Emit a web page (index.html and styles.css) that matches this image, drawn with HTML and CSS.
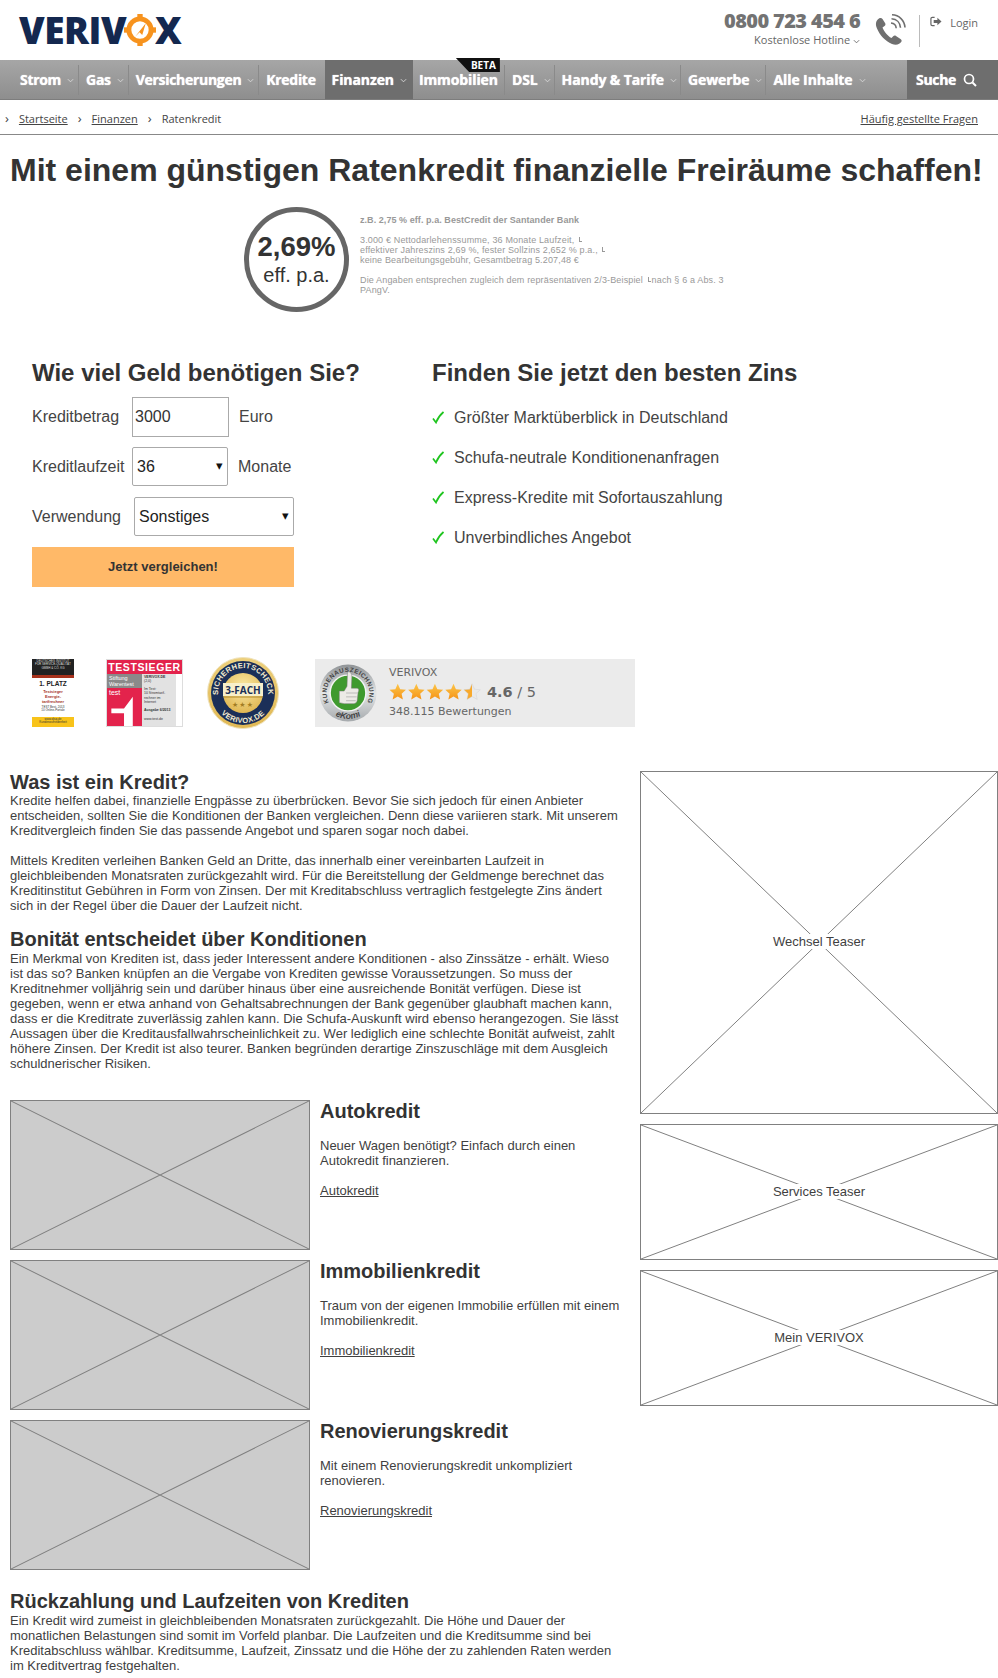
FILE: index.html
```html
<!DOCTYPE html>
<html lang="de">
<head>
<meta charset="utf-8">
<title>Ratenkredit - VERIVOX</title>
<link rel="stylesheet" href="styles.css">
</head>
<body>
<header class="top">
  <a class="logo" href="#">VERIV<svg class="logo-o" viewBox="0 0 36 36" aria-hidden="true"><circle cx="18" cy="18" r="12.500" fill="none" stroke="#f7931e" stroke-width="5.500"/><rect x="15" y="0" width="6" height="4" fill="#f7931e"/><rect x="15" y="32" width="6" height="4" fill="#f7931e"/><rect x="0" y="15" width="4" height="6" fill="#f7931e"/><rect x="32" y="15" width="4" height="6" fill="#f7931e"/><path d="M24.500 10.500L12.500 25.500 17.500 20.500 20.500 23.500Z" fill="#f7931e"/></svg>X</a>
  <div class="top-right">
    <div class="hotline">
      <div class="hotline-no">0800 723 454 6</div>
      <div class="hotline-sub">Kostenlose Hotline <svg class="chev" viewBox="0 0 8 5"><path d="M1 1l3 3 3-3" fill="none" stroke="currentColor"/></svg></div>
    </div>
    <svg class="phone" viewBox="0 0 34 32" aria-hidden="true"><path d="M5 4.500C2 6.500 1 10 3 14.500 6 21.500 11 27 18 30c4 1.500 8 .5 9.500-2.500.5-1-.2-1.800-1-2.500l-4.500-3c-1-.7-2-.5-2.800.3l-1.700 1.700c-4-2-7.500-6.500-9-10.500l2-1.500c1-.8 1.200-1.800.7-2.800L8.500 5C7.800 4 6.300 3.700 5 4.500Z" fill="#6f6f6f"/><path d="M17 9c2.800.2 5 2.400 5.200 5.200M17.500 4.800c5.200.3 8.700 3.800 9 9M18 .8c7.200.3 12.500 5.500 13 12.700" fill="none" stroke="#6f6f6f" stroke-width="1.600"/></svg>
    <div class="top-div"></div>
    <a class="login" href="#"><svg viewBox="0 0 13 11" aria-hidden="true"><path d="M5 1H2.500A1.500 1.500 0 0 0 1 2.500v6A1.500 1.500 0 0 0 2.500 10H5" fill="none" stroke="#666" stroke-width="1.300"/><path d="M4 4h4V1.500l4.500 4-4.500 4V7H4Z" fill="#666"/></svg>Login</a>
  </div>
</header>

<nav class="nav">
  <ul class="nav-list">
    <li class="nav-item sep first">Strom<svg class="chev" viewBox="0 0 8 5"><path d="M1 1l3 3 3-3" fill="none" stroke="currentColor"/></svg></li>
    <li class="nav-item sep">Gas<svg class="chev" viewBox="0 0 8 5"><path d="M1 1l3 3 3-3" fill="none" stroke="currentColor"/></svg></li>
    <li class="nav-item sep">Versicherungen<svg class="chev" viewBox="0 0 8 5"><path d="M1 1l3 3 3-3" fill="none" stroke="currentColor"/></svg></li>
    <li class="nav-item kredite">Kredite</li>
    <li class="nav-item wide active">Finanzen<svg class="chev" viewBox="0 0 8 5"><path d="M1 1l3 3 3-3" fill="none" stroke="currentColor"/></svg></li>
    <li class="nav-item wide sep immo">Immobilien<span class="beta">BETA</span></li>
    <li class="nav-item wide sep">DSL<svg class="chev" viewBox="0 0 8 5"><path d="M1 1l3 3 3-3" fill="none" stroke="currentColor"/></svg></li>
    <li class="nav-item wide sep">Handy &amp; Tarife<svg class="chev" viewBox="0 0 8 5"><path d="M1 1l3 3 3-3" fill="none" stroke="currentColor"/></svg></li>
    <li class="nav-item wide sep">Gewerbe<svg class="chev" viewBox="0 0 8 5"><path d="M1 1l3 3 3-3" fill="none" stroke="currentColor"/></svg></li>
    <li class="nav-item wide">Alle Inhalte<svg class="chev" viewBox="0 0 8 5"><path d="M1 1l3 3 3-3" fill="none" stroke="currentColor"/></svg></li>
  </ul>
  <div class="nav-search">Suche<svg viewBox="0 0 14 14" aria-hidden="true"><circle cx="6" cy="6" r="4.500" fill="none" stroke="#fff" stroke-width="1.700"/><path d="M9.500 9.500L13 13" stroke="#fff" stroke-width="1.900"/></svg></div>
</nav>

<div class="crumbs">
  <div class="crumb-list">
    <span class="crumb-sep">›</span><a href="#">Startseite</a>
    <span class="crumb-sep">›</span><a href="#">Finanzen</a>
    <span class="crumb-sep">›</span><span>Ratenkredit</span>
  </div>
  <a href="#">Häufig gestellte Fragen</a>
</div>

<main class="page">
  <h1 class="title">Mit einem günstigen Ratenkredit finanzielle Freiräume schaffen!</h1>

  <section class="promo">
    <div class="rate"><strong>2,69%</strong><span>eff. p.a.</span></div>
    <div class="fine">
      <p><b>z.B. 2,75 % eff. p.a. BestCredit der Santander Bank</b></p>
      <p>3.000 € Nettodarlehenssumme, 36 Monate Laufzeit, <i class="lb"></i><br>effektiver Jahreszins 2,69 %, fester Sollzins 2,652 % p.a., <i class="lb"></i><br>keine Bearbeitungsgebühr, Gesamtbetrag 5.207,48 €</p>
      <p>Die Angaben entsprechen zugleich dem repräsentativen 2/3-Beispiel <i class="lb"></i>nach § 6 a Abs. 3 PAngV.</p>
    </div>
  </section>

  <section class="calc">
    <form class="calc-form">
      <h2 class="calc-h">Wie viel Geld benötigen Sie?</h2>
      <div class="row row-first">
        <label class="lab lab-a">Kreditbetrag</label>
        <input class="field" type="text" value="3000">
        <span class="unit">Euro</span>
      </div>
      <div class="row row-tight">
        <label class="lab lab-b">Kreditlaufzeit</label>
        <div class="sel sel-s">36</div>
        <span class="unit">Monate</span>
      </div>
      <div class="row">
        <label class="lab lab-c">Verwendung</label>
        <div class="sel sel-l">Sonstiges</div>
      </div>
      <button class="go" type="button">Jetzt vergleichen!</button>
    </form>
    <div class="benefits">
      <h2 class="calc-h">Finden Sie jetzt den besten Zins</h2>
      <ul class="checks">
        <li><svg viewBox="0 0 12 13" aria-hidden="true"><path d="M1 7.500L4 11.500C5.500 7.500 8 4 11.500 1" fill="none" stroke="#1fc41f" stroke-width="1.700"/></svg>Größter Marktüberblick in Deutschland</li>
        <li><svg viewBox="0 0 12 13" aria-hidden="true"><path d="M1 7.500L4 11.500C5.500 7.500 8 4 11.500 1" fill="none" stroke="#1fc41f" stroke-width="1.700"/></svg>Schufa-neutrale Konditionenanfragen</li>
        <li><svg viewBox="0 0 12 13" aria-hidden="true"><path d="M1 7.500L4 11.500C5.500 7.500 8 4 11.500 1" fill="none" stroke="#1fc41f" stroke-width="1.700"/></svg>Express-Kredite mit Sofortauszahlung</li>
        <li><svg viewBox="0 0 12 13" aria-hidden="true"><path d="M1 7.500L4 11.500C5.500 7.500 8 4 11.500 1" fill="none" stroke="#1fc41f" stroke-width="1.700"/></svg>Unverbindliches Angebot</li>
      </ul>
    </div>
  </section>

  <section class="trust">
    <div class="b-dis">
      <div class="dis-top">DEUTSCHES INSTITUT<br>FÜR SERVICE-QUALITÄT<br>GMBH &amp; CO. KG</div>
      <div class="dis-mid"><b class="dis-big">1. PLATZ</b><b class="dis-red">Testsieger<br>Energie-<br>tarifrechner</b><span class="dis-date">TEST Best. 2013<br>10 Online-Portale</span></div>
      <div class="dis-bot">www.disq.de<br>Kundenzufriedenheit</div>
    </div>
    <div class="b-test">
      <div class="t-head">TESTSIEGER</div>
      <div class="t-body">
        <div class="t-left">
          <div class="t-war">Stiftung<br>Warentest</div>
          <div class="t-logo"><span class="t-word">test</span><svg class="t-one" viewBox="0 0 35 39" aria-hidden="true"><path d="M4 21L17 21 26 9V39H17V26H4Z" fill="#fff"/></svg></div>
        </div>
        <div class="t-right"><b>VERIVOX.DE</b><br>(2,0)<br><br>Im Test:<br>10 Stromtarif-<br>rechner im<br>Internet<br><br><b>Ausgabe 6/2013</b><br><br>www.test.de</div>
        <div class="t-strip"></div>
      </div>
    </div>
    <svg class="b-seal" viewBox="0 0 74 76" role="img" aria-label="Sicherheitscheck 3-fach Verivox.de">
      <defs>
        <path id="arcT" d="M15.300 50.500A25 25 0 1 1 58.700 50.500"/>
        <path id="arcB" d="M11 53A30 30 0 0 0 63 53"/>
        <radialGradient id="gold" cx="50%" cy="35%" r="65%"><stop offset="0" stop-color="#fbe9a6"/><stop offset="1" stop-color="#e0b752"/></radialGradient>
      </defs>
      <circle cx="37" cy="38" r="35.500" fill="url(#gold)" stroke="#efe3bd" stroke-width="1"/>
      <circle cx="37" cy="38" r="32" fill="#1b2f58"/>
      <circle cx="37" cy="38" r="20" fill="url(#gold)"/>
      <rect x="17" y="28" width="40" height="13" fill="#f8efca"/>
      <text class="seal-arc"><textPath href="#arcT" startOffset="50%" text-anchor="middle">SICHERHEITSCHECK</textPath></text>
      <text class="seal-arc"><textPath href="#arcB" startOffset="50%" text-anchor="middle">VERIVOX.DE</textPath></text>
      <text class="seal-main" x="37" y="39" text-anchor="middle">3-FACH</text>
      <path d="M18 42H56" stroke="#b18a2d"/>
      <text class="seal-stars" x="37" y="52" text-anchor="middle">★★★</text>
    </svg>
    <div class="b-ekomi">
      <svg class="ek-badge" viewBox="0 0 60 60" role="img" aria-label="Kundenauszeichnung eKomi">
        <defs>
          <path id="ekT" d="M14.400 45.600A22 22 0 1 1 45.600 45.600"/>
          <path id="ekB" d="M11 49A27 27 0 0 0 49 49"/>
          <linearGradient id="silver" x1="0" y1="0" x2="0" y2="1"><stop offset="0" stop-color="#8f9396"/><stop offset=".5" stop-color="#e4e6e7"/><stop offset="1" stop-color="#a6aaad"/></linearGradient>
        </defs>
        <circle cx="30" cy="30" r="29.500" fill="url(#silver)"/>
        <circle cx="30" cy="30" r="18.500" fill="#3f9a2e" stroke="#f3f3f3" stroke-width="1.500"/>
        <path d="M21 28h5l3-5 .5-15c3.500 0 4.500 2 4.500 5l-.5 12h6c2 0 2 3 1 4l-1 9c-.5 2-2 3-4 3H26l-5-1Z" fill="#ecebe6" stroke="#777" stroke-width=".5"/>
        <path d="M28 30h12M28 34h11M28 38h10" stroke="#999" stroke-width=".6"/>
        <text class="ek-arc"><textPath href="#ekT" startOffset="50%" text-anchor="middle">KUNDENAUSZEICHNUNG</textPath></text>
        <text class="ek-name"><textPath href="#ekB" startOffset="50%" text-anchor="middle">eKomi</textPath></text>
      </svg>
      <div class="ek-text">
        <div class="ek-name-line">VERIVOX</div>
        <div class="ek-rating">
          <svg class="ek-stars" viewBox="0 0 96 19" aria-hidden="true">
            <defs>
              <linearGradient id="st" x1="0" y1="0" x2="0" y2="1"><stop offset="0" stop-color="#fcc64a"/><stop offset="1" stop-color="#f59316"/></linearGradient>
              <linearGradient id="sh" x1="0" y1="0" x2="1" y2="0"><stop offset=".5" stop-color="#f8a92c"/><stop offset=".5" stop-color="#e9e9e9"/></linearGradient>
              <path id="s" d="M9 .8l2.500 5.600 6 .6-4.500 4 1.300 6L9 14l-5.300 3 1.300-6-4.500-4 6-.6Z"/>
            </defs>
            <use href="#s" fill="url(#st)"/><use href="#s" x="19.200" fill="url(#st)"/><use href="#s" x="38.400" fill="url(#st)"/><use href="#s" x="57.600" fill="url(#st)"/><use href="#s" x="76.800" fill="url(#sh)" stroke="#ccc" stroke-width=".4"/>
          </svg>
          <span class="ek-score"><b>4.6</b> / 5</span>
        </div>
        <div class="ek-count">348.115 Bewertungen</div>
      </div>
    </div>
  </section>

  <div class="columns">
    <div class="col-main">
      <h2 class="sec-h sec-first">Was ist ein Kredit?</h2>
      <p class="copy">Kredite helfen dabei, finanzielle Engpässe zu überbrücken. Bevor Sie sich jedoch für einen Anbieter entscheiden, sollten Sie die Konditionen der Banken vergleichen. Denn diese variieren stark. Mit unserem Kreditvergleich finden Sie das passende Angebot und sparen sogar noch dabei.<br><br>Mittels Krediten verleihen Banken Geld an Dritte, das innerhalb einer vereinbarten Laufzeit in gleichbleibenden Monatsraten zurückgezahlt wird. Für die Bereitstellung der Geldmenge berechnet das Kreditinstitut Gebühren in Form von Zinsen. Der mit Kreditabschluss vertraglich festgelegte Zins ändert sich in der Regel über die Dauer der Laufzeit nicht.</p>
      <h2 class="sec-h sec-gap">Bonität entscheidet über Konditionen</h2>
      <p class="copy">Ein Merkmal von Krediten ist, dass jeder Interessent andere Konditionen - also Zinssätze - erhält. Wieso ist das so? Banken knüpfen an die Vergabe von Krediten gewisse Voraussetzungen. So muss der Kreditnehmer volljährig sein und darüber hinaus über eine ausreichende Bonität verfügen. Diese ist gegeben, wenn er etwa anhand von Gehaltsabrechnungen der Bank gegenüber glaubhaft machen kann, dass er die Kreditrate zuverlässig zahlen kann. Die Schufa-Auskunft wird ebenso herangezogen. Sie lässt Aussagen über die Kreditausfallwahrscheinlichkeit zu. Wer lediglich eine schlechte Bonität aufweist, zahlt höhere Zinsen. Der Kredit ist also teurer. Banken begründen derartige Zinszuschläge mit dem Ausgleich schuldnerischer Risiken.</p>

      <div class="cards">
        <article class="card">
          <svg class="ph-img" viewBox="0 0 300 150" preserveAspectRatio="none" aria-hidden="true"><path d="M0 0L300 150M300 0L0 150" stroke="#808080" vector-effect="non-scaling-stroke"/></svg>
          <div class="card-body"><h3>Autokredit</h3><p class="copy">Neuer Wagen benötigt? Einfach durch einen Autokredit finanzieren.</p><a href="#">Autokredit</a></div>
        </article>
        <article class="card">
          <svg class="ph-img" viewBox="0 0 300 150" preserveAspectRatio="none" aria-hidden="true"><path d="M0 0L300 150M300 0L0 150" stroke="#808080" vector-effect="non-scaling-stroke"/></svg>
          <div class="card-body"><h3>Immobilienkredit</h3><p class="copy">Traum von der eigenen Immobilie erfüllen mit einem Immobilienkredit.</p><a href="#">Immobilienkredit</a></div>
        </article>
        <article class="card">
          <svg class="ph-img" viewBox="0 0 300 150" preserveAspectRatio="none" aria-hidden="true"><path d="M0 0L300 150M300 0L0 150" stroke="#808080" vector-effect="non-scaling-stroke"/></svg>
          <div class="card-body"><h3>Renovierungskredit</h3><p class="copy">Mit einem Renovierungskredit unkompliziert renovieren.</p><a href="#">Renovierungskredit</a></div>
        </article>
      </div>

      <h2 class="sec-h">Rückzahlung und Laufzeiten von Krediten</h2>
      <p class="copy">Ein Kredit wird zumeist in gleichbleibenden Monatsraten zurückgezahlt. Die Höhe und Dauer der monatlichen Belastungen sind somit im Vorfeld planbar. Die Laufzeiten und die Kreditsumme sind bei Kreditabschluss wählbar. Kreditsumme, Laufzeit, Zinssatz und die Höhe der zu zahlenden Raten werden im Kreditvertrag festgehalten.</p>
    </div>
    <aside class="col-side">
      <div class="teaser t-big"><svg viewBox="0 0 358 343" preserveAspectRatio="none" aria-hidden="true"><path d="M0 0L358 343M358 0L0 343" stroke="#808080" vector-effect="non-scaling-stroke"/></svg><span>Wechsel Teaser</span></div>
      <div class="teaser t-small"><svg viewBox="0 0 358 136" preserveAspectRatio="none" aria-hidden="true"><path d="M0 0L358 136M358 0L0 136" stroke="#808080" vector-effect="non-scaling-stroke"/></svg><span>Services Teaser</span></div>
      <div class="teaser t-small"><svg viewBox="0 0 358 136" preserveAspectRatio="none" aria-hidden="true"><path d="M0 0L358 136M358 0L0 136" stroke="#808080" vector-effect="non-scaling-stroke"/></svg><span>Mein VERIVOX</span></div>
    </aside>
  </div>
</main>
</body>
</html>
```
FILE: styles.css
```css
* { box-sizing: border-box; }
html, body { margin: 0; padding: 0; background: #fff; }
body { font-family: "Liberation Sans", Arial, sans-serif; color: #333; font-size: 13px; line-height: 15px; overflow-x: hidden; }
a { color: inherit; }
ul { list-style: none; margin: 0; padding: 0; }
p { margin: 0; }

.top { height: 60px; display: flex; justify-content: space-between; align-items: flex-start; padding: 0 20px 0 19px; }
.logo { display: flex; align-items: center; height: 36px; margin-top: 12px; font-family: "Open Sans", sans-serif; font-weight: 800; font-size: 37px; line-height: 36px; color: #14284f; text-decoration: none; letter-spacing: -0.5px; }
.logo-o { width: 32px; height: 32px; margin: 0 -1px 0 -2px; }
.top-right { display: flex; align-items: flex-start; font-family: "Open Sans", sans-serif; color: #666; }
.hotline { margin-top: 8px; text-align: right; }
.hotline-no { font-size: 20px; line-height: 26px; font-weight: 800; color: #737373; letter-spacing: -0.6px; }
.hotline-sub { font-size: 11px; line-height: 12px; }
.chev { width: 7px; height: 5px; }
.phone { width: 34px; height: 32px; margin: 14px 0 0 14px; }
.top-div { width: 1px; height: 32px; background: #bbb; margin: 15px 0 0 11px; }
.login { display: flex; align-items: center; font-size: 11px; line-height: 15px; margin: 15px 0 0 10px; text-decoration: none; }
.login svg { width: 12px; height: 11px; margin-right: 8px; margin-top: -2px; }

.nav { height: 40px; display: flex; justify-content: space-between; background: linear-gradient(#a6a6a6, #8e8e8e); border-bottom: 1px solid #7d7d7d; font-family: "Open Sans", sans-serif; color: #fff; font-weight: 700; font-size: 14px; text-shadow: 0 0 1px #fff; letter-spacing: -0.3px; }
.nav-list { display: flex; padding-left: 13px; }
.nav-item { position: relative; display: flex; align-items: center; gap: 6px; height: 39px; padding: 0 5px 0 7px; }
.nav-item.wide { letter-spacing: -0.1px; padding-right: 4px; }
.nav-item .chev { color: #ddd; margin-top: 2px; }
.nav-item.sep::after { content: ""; position: absolute; right: 0; top: 5px; height: 30px; width: 1px; background: #8a8a8a; }
.nav-item.kredite { padding-right: 9px; }
.nav-item.active { background: #6e6e6e; padding-right: 6px; }
.nav-item.immo { padding-left: 6px; padding-right: 7px; }
.beta { position: absolute; right: 5px; top: -2px; width: 44px; height: 14px; padding-left: 15px; background: #111; clip-path: polygon(0 0, 100% 0, 100% 100%, 30% 100%); font-size: 10px; line-height: 15px; letter-spacing: 0; text-shadow: none; }
.nav-search { width: 91px; background: #6e6e6e; display: flex; align-items: center; gap: 7px; padding-left: 9px; }
.nav-search svg { width: 14px; height: 14px; }

.crumbs { height: 35px; border-bottom: 1px solid #888; display: flex; justify-content: space-between; align-items: center; padding: 3px 20px 0 5px; font-family: "Open Sans", sans-serif; font-size: 11px; color: #444; }
.crumb-list { display: flex; align-items: center; }
.crumb-sep { margin-right: 10px; margin-left: 10px; font-size: 13px; }
.crumb-sep:first-child { margin-left: 0; }

.page { padding: 0 0 0 10px; }
.title { margin: 0; padding-top: 17px; font-size: 32px; line-height: 36px; font-weight: 700; color: #333; }

.promo { display: flex; margin-top: 19px; padding-left: 234px; height: 105px; }
.rate { width: 105px; height: 105px; border: 5px solid #666; border-radius: 50%; display: flex; flex-direction: column; align-items: center; justify-content: center; flex: none; }
.rate strong { font-size: 27.500px; line-height: 30px; }
.rate span { font-size: 20px; line-height: 26px; }
.fine { width: 372px; margin-left: 11px; margin-top: 8px; font-size: 9px; line-height: 10px; color: #999; letter-spacing: .15px; }
.fine b { letter-spacing: .06px; }
.fine p { margin-bottom: 10px; }
.lb { display: inline-block; width: 3px; height: 5px; margin: 0 1px 1px 2px; border-left: 1px solid #999; border-bottom: 1px solid #999; }

.calc { display: flex; padding: 47px 0 0 22px; }
.calc-form { width: 400px; }
.calc-h { margin: 0; font-size: 24px; line-height: 28px; font-weight: 700; color: #333; }
.row { display: flex; align-items: center; height: 40px; margin-top: 10px; font-size: 16px; color: #444; }
.row-tight { margin-top: 9px; }
.row-first .lab, .row-first .unit { margin-bottom: 2px; }
.lab-a { width: 100px; }
.lab-b { width: 100px; }
.lab-c { width: 102px; }
.field { width: 97px; height: 40px; border: 1px solid #aaa; padding: 0 2px; font: 16px "Liberation Sans", Arial, sans-serif; color: #333; }
.sel { position: relative; height: 39px; border: 1px solid #aaa; border-radius: 2px; background: #fff; display: flex; align-items: center; padding-left: 4px; color: #222; }
.sel::after { content: "▾"; position: absolute; right: 4px; top: 10px; font-size: 13px; line-height: 15px; color: #111; }
.sel-s { width: 96px; }
.sel-l { width: 160px; }
.unit { margin-left: 10px; }
.go { display: block; width: 262px; height: 40px; margin-top: 11px; padding: 0 0 2px; background: #ffb968; border: 0; font: 700 13px "Liberation Sans", Arial, sans-serif; color: #333; }
.checks { margin-top: 10px; font-size: 16px; color: #444; }
.checks li { display: flex; align-items: center; height: 40px; }
.checks svg { width: 12px; height: 13px; margin-right: 10px; }

.trust { display: flex; align-items: center; height: 75px; margin-top: 68px; padding-left: 22px; }
.b-dis { width: 42px; height: 68px; font-size: 3px; line-height: 3.500px; text-align: center; display: flex; flex-direction: column; background: #fff; }
.dis-top { background: #222; color: #ddd; height: 16px; padding-top: 1px; }
.dis-mid { flex: 1; background: linear-gradient(#a8321c 0 3px, #fff 3px); display: flex; flex-direction: column; color: #333; padding-top: 5px; }
.dis-big { font-size: 6.500px; line-height: 7px; color: #222; }
.dis-red { font-size: 4px; line-height: 5px; color: #a3321f; margin-top: 2px; }
.dis-date { margin-top: 2px; }
.dis-bot { background: #f8c31a; height: 10px; padding-top: 1px; color: #333; }
.b-test { width: 77px; height: 68px; margin-left: 32px; border: 1px solid #ddd; display: flex; flex-direction: column; font-size: 3.500px; line-height: 4.200px; }
.t-head { height: 14px; background: #e3234c; color: #fff; font-size: 10.500px; line-height: 14px; font-weight: 700; text-align: center; letter-spacing: .6px; }
.t-body { flex: 1; display: flex; }
.t-left { width: 35px; display: flex; flex-direction: column; }
.t-war { height: 14px; background: #8a8a8a; color: #fff; font-size: 5.500px; line-height: 6.500px; padding: 1px 0 0 2px; }
.t-logo { position: relative; flex: 1; background: #e3234c; }
.t-word { position: absolute; left: 2px; top: 1px; color: #fff; font-size: 7px; line-height: 8px; }
.t-one { position: absolute; left: 0; top: 0; width: 100%; height: 100%; }
.t-right { flex: 1; background: #e2e2e2; padding: 1px 0 0 2px; color: #333; }
.t-strip { width: 6px; background: #fff; }
.b-seal { width: 74px; height: 76px; margin-left: 23px; }
.seal-arc { font: 700 7.500px "Liberation Sans", Arial, sans-serif; fill: #f4ecd0; letter-spacing: .3px; }
.seal-main { font: 700 10px "Open Sans", sans-serif; fill: #1b2f58; }
.seal-stars { font: 7px "DejaVu Sans", sans-serif; fill: #a27c22; letter-spacing: 1px; }
.b-ekomi { width: 320px; height: 68px; margin-left: 35px; background: #ebebeb; display: flex; align-items: center; padding-left: 4px; font-family: "DejaVu Sans", sans-serif; color: #666; }
.ek-badge { width: 58px; height: 58px; }
.ek-arc { font: 700 6.500px "Liberation Sans", Arial, sans-serif; fill: #444; letter-spacing: .5px; }
.ek-name { font: italic 700 9px "Liberation Sans", Arial, sans-serif; fill: #444; }
.ek-text { margin-left: 12px; }
.ek-name-line { font-size: 11px; line-height: 13px; }
.ek-rating { display: flex; align-items: center; height: 20px; margin-top: 3px; }
.ek-stars { width: 93px; height: 18.400px; }
.ek-score { font-size: 14.500px; margin-left: 5px; }
.ek-count { font-size: 11px; line-height: 14px; margin-top: 3px; }

.columns { display: flex; margin-top: 41px; }
.col-main { width: 615px; }
.col-side { width: 358px; margin-left: 15px; flex: none; display: flex; flex-direction: column; gap: 10px; }
.sec-h { margin: 0; font-size: 20px; line-height: 23px; font-weight: 700; color: #333; }
.sec-first { line-height: 22px; }
.sec-gap { margin-top: 15px; }
.copy { font-size: 13px; line-height: 15px; color: #3f3f3f; }
.cards { display: flex; flex-direction: column; gap: 10px; margin: 29px 0 20px; }
.card { display: flex; height: 150px; }
.ph-img { width: 300px; height: 150px; flex: none; background: #ccc; border: 1px solid #808080; }
.card-body { margin-left: 10px; width: 305px; color: #3f3f3f; }
.card-body h3 { margin: 0 0 16px; font-size: 20px; line-height: 22px; font-weight: 700; color: #333; }
.card-body .copy { margin-bottom: 15px; }

.teaser { position: relative; border: 1px solid #808080; display: flex; align-items: center; justify-content: center; color: #3f3f3f; }
.teaser svg { position: absolute; inset: 0; width: 100%; height: 100%; }
.teaser span { position: relative; background: #fff; padding: 0 4px; margin-top: -1px; }
.t-big { height: 343px; }
.t-big span { margin-top: -3px; }
.t-small { height: 136px; }
```
